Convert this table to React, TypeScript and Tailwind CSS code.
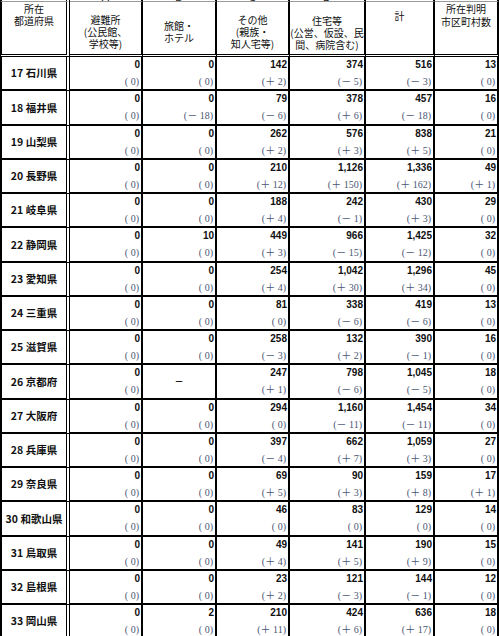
import React from "react";

type Cell = [string, number] | null;
type Row = [string, Cell[]];

const rows: Row[] = [
  ["17 石川県", [["0", 0], ["0", 0], ["142", 2], ["374", -5], ["516", -3], ["13", 0]]],
  ["18 福井県", [["0", 0], ["0", -18], ["79", -6], ["378", 6], ["457", -18], ["16", 0]]],
  ["19 山梨県", [["0", 0], ["0", 0], ["262", 2], ["576", 3], ["838", 5], ["21", 0]]],
  ["20 長野県", [["0", 0], ["0", 0], ["210", 12], ["1,126", 150], ["1,336", 162], ["49", 1]]],
  ["21 岐阜県", [["0", 0], ["0", 0], ["188", 4], ["242", -1], ["430", 3], ["29", 0]]],
  ["22 静岡県", [["0", 0], ["10", 0], ["449", 3], ["966", -15], ["1,425", -12], ["32", 0]]],
  ["23 愛知県", [["0", 0], ["0", 0], ["254", 4], ["1,042", 30], ["1,296", 34], ["45", 0]]],
  ["24 三重県", [["0", 0], ["0", 0], ["81", 0], ["338", -6], ["419", -6], ["13", 0]]],
  ["25 滋賀県", [["0", 0], ["0", 0], ["258", -3], ["132", 2], ["390", -1], ["16", 0]]],
  ["26 京都府", [["0", 0], null, ["247", 1], ["798", -6], ["1,045", -5], ["18", 0]]],
  ["27 大阪府", [["0", 0], ["0", 0], ["294", 0], ["1,160", -11], ["1,454", -11], ["34", 0]]],
  ["28 兵庫県", [["0", 0], ["0", 0], ["397", -4], ["662", 7], ["1,059", 3], ["27", 0]]],
  ["29 奈良県", [["0", 0], ["0", 0], ["69", 5], ["90", 3], ["159", 8], ["17", 1]]],
  ["30 和歌山県", [["0", 0], ["0", 0], ["46", 0], ["83", 0], ["129", 0], ["14", 0]]],
  ["31 鳥取県", [["0", 0], ["0", 0], ["49", 4], ["141", 5], ["190", 9], ["15", 0]]],
  ["32 島根県", [["0", 0], ["0", 0], ["23", 2], ["121", -3], ["144", -1], ["12", 0]]],
  ["33 岡山県", [["0", 0], ["2", 0], ["210", 11], ["424", 6], ["636", 17], ["18", 0]]],
];

function fmt(n: number): string {
  if (n === 0) return "( 0)";
  return `(${n > 0 ? "＋" : "－"} ${Math.abs(n)})`;
}

const C1 =
  "border-l-2 border-r-4 border-b-2 border-black border-solid [border-right-style:double]";
const CN = "border-r-2 border-b-2 border-black border-solid";

const cjk = "font-['Noto_Sans_CJK_JP',sans-serif]";

type Head = { lines: string[]; cls: string };
const heads: Head[] = [
  { lines: ["避難所", "(公民館、", "学校等)"], cls: "pt-[12px] leading-[12px]" },
  { lines: ["旅館・", "ホテル"], cls: "pt-[18px] leading-[12px]" },
  { lines: ["その他", "(親族・", "知人宅等)"], cls: "pt-[12px] leading-[12px]" },
  { lines: ["住宅等", "(公営、仮設、民", "間、病院含む)"], cls: "pt-[13px] leading-[12px]" },
  { lines: ["計"], cls: "pt-[8px] leading-[12px]" },
  { lines: ["所在判明", "市区町村数"], cls: "pt-0 leading-[13px]" },
];

const letters = ["", "A", "B", "C", "D", "", ""];

export default function App() {
  return (
    <div className="w-[499px] h-[636px] overflow-hidden bg-white">
      <div className="grid grid-cols-[70px_73px_74px_73px_76px_69px_64px]">
        {/* clipped strip of the row above */}
        {letters.map((l, i) => (
          <div
            key={"s" + i}
            className={
              (i === 0
                ? "border-l-2 border-r-4 border-black [border-right-style:double]"
                : "border-r-2 border-black") +
              " h-[2px] overflow-hidden [border-bottom:1px_solid_#9a9a9a]"
            }
          >
            <div className="-mt-[8px] text-center text-[11px] leading-none font-['Liberation_Sans',sans-serif] text-[#222]">
              {l}
            </div>
          </div>
        ))}

        {/* header row */}
        <div
          className={`${C1} border-b-[3px] [border-bottom-style:double] h-[55px] pt-[1px] text-center text-[10px] leading-[12px] text-[#111] ${cjk}`}
        >
          <div>所在</div>
          <div>都道府県</div>
        </div>
        {heads.map((h, i) => (
          <div
            key={"h" + i}
            className={`${CN} border-b-[3px] [border-bottom-style:double] h-[55px] text-center text-[10px] text-[#111] whitespace-nowrap ${h.cls} ${cjk}`}
          >
            {h.lines.map((ln, j) => (
              <div key={j}>{ln}</div>
            ))}
          </div>
        ))}

        {/* data rows */}
        {rows.map(([label, cells]) => (
          <React.Fragment key={label}>
            <div
              className={`${C1} h-[34.25px] flex items-center justify-center text-[10.5px] font-bold text-[#111] whitespace-nowrap ${cjk}`}
            >
              {label}
            </div>
            {cells.map((c, i) => (
              <div key={i} className={`${CN} h-[34.25px]`}>
                {c === null ? (
                  <div className={`h-full flex items-center justify-center text-[9px] font-bold text-[#111] ${cjk}`}>
                    －
                  </div>
                ) : (
                  <div className="flex flex-col items-end">
                    <div className="h-[16px] leading-[16px] pr-[1px] text-[10px] font-bold text-[#111] font-['Liberation_Sans',sans-serif]">
                      {c[0]}
                    </div>
                    <div className="h-[16px] leading-[17px] pr-[2px] text-[10px] text-[#4a5675] whitespace-pre font-['Liberation_Serif','Noto_Sans_CJK_JP',serif]">
                      {fmt(c[1])}
                    </div>
                  </div>
                )}
              </div>
            ))}
          </React.Fragment>
        ))}
      </div>
    </div>
  );
}
